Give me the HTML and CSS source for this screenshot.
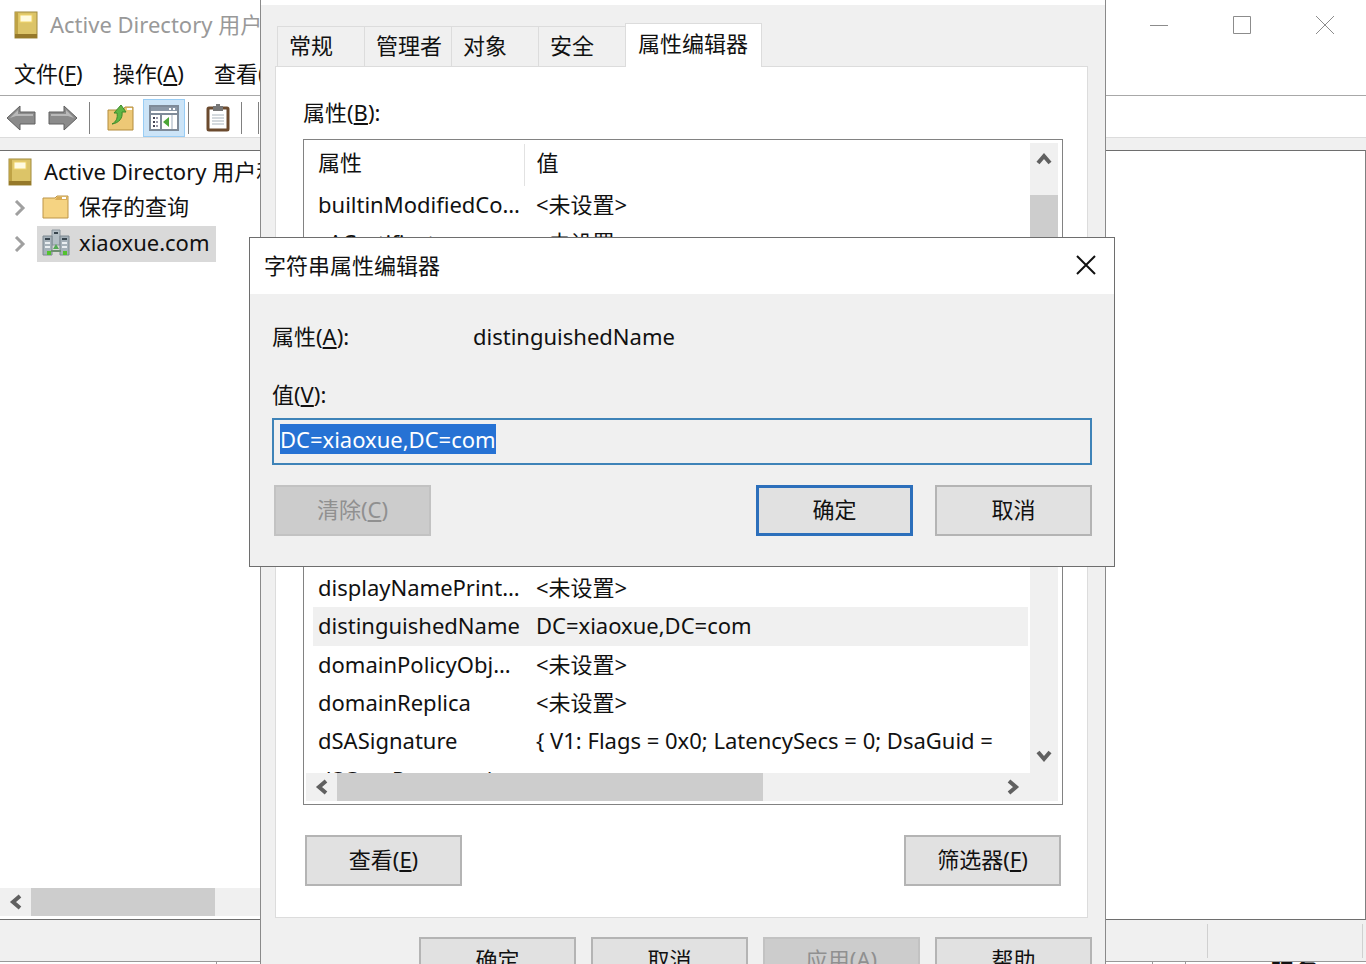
FILE: index.html
```
<!DOCTYPE html>
<html lang="zh-CN">
<head>
    <meta charset="UTF-8">
    <meta name="viewport" content="width=device-width, initial-scale=1.0">
    <title>Active Directory 用户和计算机</title>
    <link rel="stylesheet" href="styles.css">
</head>
<body>

<!-- Main console window -->
<div class="console">
    <div class="console-title">
        <svg class="icon-book" width="24" height="28" viewBox="0 0 24 28">
            <rect x="1" y="1" width="22" height="26" fill="#dcc468" stroke="#a08a3c"/>
            <rect x="1" y="1" width="3" height="26" fill="#bfa345"/>
            <rect x="1" y="23" width="22" height="4" fill="#96792a"/>
            <rect x="6" y="4" width="12" height="7" fill="#fffbe0" stroke="#f0d468"/>
        </svg>
        <span class="console-name">Active Directory 用户和计算机</span>
        <div class="window-buttons">
            <button aria-label="最小化"><svg width="20" height="20" viewBox="0 0 20 20"><path d="M1 10.500H19"/></svg></button>
            <button aria-label="最大化"><svg width="20" height="20" viewBox="0 0 20 20"><path d="M1.500 1.500H18.500V18.500H1.500Z"/></svg></button>
            <button aria-label="关闭"><svg width="20" height="20" viewBox="0 0 20 20"><path d="M1 1L19 19M19 1L1 19"/></svg></button>
        </div>
    </div>

    <div class="menubar">
        <button>文件(<u>F</u>)</button>
        <button>操作(<u>A</u>)</button>
        <button>查看(<u>V</u>)</button>
        <button>帮助(<u>H</u>)</button>
    </div>

    <div class="toolbar">
        <button class="tool" aria-label="后退">
            <svg width="30" height="28" viewBox="0 0 30 28">
                <path d="M1 14L14 2V8H29V20H14V26Z" fill="#8b8b8b" stroke="#606060"/>
                <path d="M4 14L12 6V10H27V12H10Z" fill="#b9b9b9"/>
            </svg>
        </button>
        <button class="tool" aria-label="前进">
            <svg width="30" height="28" viewBox="0 0 30 28">
                <path d="M29 14L16 2V8H1V20H16V26Z" fill="#8b8b8b" stroke="#606060"/>
                <path d="M26 14L18 6V10H3V12H20Z" fill="#b9b9b9"/>
            </svg>
        </button>
        <span class="sep"></span>
        <button class="tool" aria-label="上一级">
            <svg width="28" height="28" viewBox="0 0 28 28">
                <path d="M1 6H10L12 9L16 6L18 3H26V26H1Z" fill="#edc876" stroke="#b38c3c"/>
                <path d="M20 4H25V6H20Z" fill="#fff"/>
                <path d="M5 20C9 18 11 14 10 9L7 9L14 1L19 8L15 8C16 14 12 19 5 20Z" fill="#5fb544" stroke="#3c8a29"/>
            </svg>
        </button>
        <button class="tool tool-on" aria-label="显示/隐藏控制台树">
            <svg width="30" height="26" viewBox="0 0 30 26">
                <rect x="1" y="1" width="28" height="24" fill="#fff" stroke="#7f8b99" stroke-width="2"/>
                <rect x="2" y="2" width="26" height="4" fill="#8c99a8"/>
                <path d="M20 4H22M24 4H26" stroke="#fff" stroke-width="2"/>
                <path d="M2 9H28M12 9V25" stroke="#7f8b99" stroke-width="2"/>
                <path d="M4 13H6M4 17H6M4 21H6" stroke="#445" stroke-width="2"/>
                <path d="M7 13H9M7 17H9M7 21H9" stroke="#99a" stroke-width="2"/>
                <path d="M14 17L20 12V22Z" fill="#4ca637"/>
                <path d="M23 10V24" stroke="#cfd6de" stroke-width="2"/>
            </svg>
        </button>
        <span class="sep"></span>
        <button class="tool" aria-label="属性">
            <svg width="24" height="28" viewBox="0 0 24 28">
                <rect x="2" y="4" width="20" height="22" rx="1" fill="#fff" stroke="#6b4a2e" stroke-width="3"/>
                <path d="M7 2H10V0H14V2H17V7H7Z" fill="#777"/>
                <path d="M6 11H18M6 14H18M6 17H18M6 20H18" stroke="#a9b4bd"/>
            </svg>
        </button>
        <span class="sep"></span>
        <span class="sep"></span>
    </div>

    <div class="workspace">
        <div class="tree">
            <ul>
                <li>
                    <svg class="icon-book" width="24" height="28" viewBox="0 0 24 28">
                        <rect x="1" y="1" width="22" height="26" fill="#dcc468" stroke="#a08a3c"/>
                        <rect x="1" y="1" width="3" height="26" fill="#bfa345"/>
                        <rect x="1" y="23" width="22" height="4" fill="#96792a"/>
                        <rect x="6" y="4" width="12" height="7" fill="#fffbe0" stroke="#f0d468"/>
                    </svg>
                    <span>Active Directory 用户和计算机</span>
                </li>
                <li class="child">
                    <svg class="chevron" width="12" height="16" viewBox="0 0 12 16"><path d="M2 1L9 8L2 15"/></svg>
                    <span class="node">
                        <svg width="28" height="26" viewBox="0 0 28 26">
                            <path d="M1 4H13L15 2H26V24H1Z" fill="#f5d382" stroke="#bd9548"/>
                            <path d="M15 3H25V6H13Z" fill="#d9ac55"/>
                            <path d="M20 4H24" stroke="#fff" stroke-width="2"/>
                        </svg>
                        <span>保存的查询</span>
                    </span>
                </li>
                <li class="child">
                    <svg class="chevron" width="12" height="16" viewBox="0 0 12 16"><path d="M2 1L9 8L2 15"/></svg>
                    <span class="node node-on">
                        <svg width="28" height="28" viewBox="0 0 28 28">
                            <path d="M10 1H18V16H10Z" fill="#b4bfc6" stroke="#8a959d"/>
                            <path d="M1 7H10V26H1Z" fill="#a5b1b9" stroke="#7d8890"/>
                            <path d="M18 7H27V26H18Z" fill="#a5b1b9" stroke="#7d8890"/>
                            <path d="M12 4H16M3 10H8M20 10H25" stroke="#37444d" stroke-width="2"/>
                            <path d="M3 14H8M20 14H25M3 18H8M20 18H25" stroke="#e9eef1" stroke-width="2"/>
                            <path d="M11 20L14 15L17 20Z" fill="#54a955"/>
                            <path d="M5 22H9V26H5ZM21 22H25V26H21Z" fill="#53c22f"/>
                            <path d="M9 22H19" stroke="#6f8f72" stroke-width="2"/>
                        </svg>
                        <span>xiaoxue.com</span>
                    </span>
                </li>
            </ul>
            <div class="hscroll">
                <button aria-label="向左滚动"><svg class="arrow" width="14" height="16" viewBox="0 0 14 16"><path d="M11 2L4 8L11 14"/></svg></button>
                <div class="thumb tree-thumb"></div>
            </div>
        </div>
        <div class="detail"></div>
    </div>

    <div class="statusbar"><span></span><span></span></div>
    <div class="behind">
        <span class="behind-left"></span>
        <span class="behind-mid"></span>
        <span class="behind-cell"></span>
        <b>服务</b>
    </div>
</div>

<!-- Properties dialog -->
<div class="properties" role="dialog" aria-label="属性">
    <div class="tabs" role="tablist">
        <button role="tab">常规</button>
        <button role="tab">管理者</button>
        <button role="tab">对象</button>
        <button role="tab">安全</button>
        <button role="tab" class="active" aria-selected="true">属性编辑器</button>
    </div>
    <div class="tab-page">
        <div class="list-label" id="list-label">属性(<u>B</u>):</div>
        <div class="list">
            <div class="list-view">
                <table aria-labelledby="list-label">
                    <thead>
                        <tr><th class="col-name">属性</th><th>值</th></tr>
                    </thead>
                    <tbody>
                        <tr><td>builtinModifiedCount</td><td>&lt;未设置&gt;</td></tr>
                        <tr><td>cACertificate</td><td>&lt;未设置&gt;</td></tr>
                        <tr><td>canonicalName</td><td>xiaoxue.com/</td></tr>
                        <tr><td>cn</td><td>&lt;未设置&gt;</td></tr>
                        <tr><td>controlAccessRights</td><td>&lt;未设置&gt;</td></tr>
                        <tr><td>createTimeStamp</td><td>&lt;未设置&gt;</td></tr>
                        <tr><td>creationTime</td><td>&lt;未设置&gt;</td></tr>
                        <tr><td>dc</td><td>xiaoxue</td></tr>
                        <tr><td>description</td><td>&lt;未设置&gt;</td></tr>
                        <tr><td>displayName</td><td>&lt;未设置&gt;</td></tr>
                        <tr><td>displayNamePrintable</td><td>&lt;未设置&gt;</td></tr>
                        <tr class="selected"><td>distinguishedName</td><td>DC=xiaoxue,DC=com</td></tr>
                        <tr><td>domainPolicyObject</td><td>&lt;未设置&gt;</td></tr>
                        <tr><td>domainReplica</td><td>&lt;未设置&gt;</td></tr>
                        <tr><td>dSASignature</td><td>{ V1: Flags = 0x0; LatencySecs = 0; DsaGuid =</td></tr>
                        <tr><td>dSCorePropagationData</td><td></td></tr>
                    </tbody>
                </table>
            </div>
            <div class="vscroll">
                <button aria-label="向上滚动"><svg class="arrow" width="16" height="14" viewBox="0 0 16 14"><path d="M2 11L8 4L14 11"/></svg></button>
                <div class="thumb"></div>
                <button aria-label="向下滚动"><svg class="arrow" width="16" height="14" viewBox="0 0 16 14"><path d="M2 3L8 10L14 3"/></svg></button>
            </div>
            <div class="hscroll">
                <button aria-label="向左滚动"><svg class="arrow" width="14" height="16" viewBox="0 0 14 16"><path d="M11 2L4 8L11 14"/></svg></button>
                <div class="thumb list-thumb"></div>
                <button class="last" aria-label="向右滚动"><svg class="arrow" width="14" height="16" viewBox="0 0 14 16"><path d="M3 2L10 8L3 14"/></svg></button>
            </div>
        </div>
        <div class="page-buttons">
            <button class="btn">查看(<u>E</u>)</button>
            <button class="btn">筛选器(<u>F</u>)</button>
        </div>
    </div>
    <div class="dialog-buttons">
        <button class="btn">确定</button>
        <button class="btn">取消</button>
        <button class="btn" disabled>应用(<u>A</u>)</button>
        <button class="btn">帮助</button>
    </div>
</div>

<!-- String attribute editor -->
<form class="editor" role="dialog" aria-labelledby="editor-title" onsubmit="return false">
    <div class="editor-title">
        <span id="editor-title">字符串属性编辑器</span>
        <button type="button" aria-label="关闭"><svg width="20" height="20" viewBox="0 0 20 20"><path d="M1 1L19 19M19 1L1 19"/></svg></button>
    </div>
    <div class="editor-body">
        <div class="editor-row"><span>属性(<u>A</u>):</span><span>distinguishedName</span></div>
        <label for="value">值(<u>V</u>):</label>
        <input type="text" id="value" value="DC=xiaoxue,DC=com" readonly>
        <div class="editor-buttons">
            <button type="button" class="btn" disabled>清除(<u>C</u>)</button>
            <button type="submit" class="btn btn-default">确定</button>
            <button type="button" class="btn">取消</button>
        </div>
    </div>
</form>

<script>
    // Select the whole value when the editor opens
    const valueInput = document.getElementById('value');
    valueInput.focus();
    valueInput.select();
</script>

</body>
</html>
```
FILE: styles.css
```
* {
    box-sizing: border-box;
}
body {
    margin: 0;
    height: 100vh;
    overflow: hidden;
    position: relative;
    background: #fff;
    color: #111;
    font-family: "Noto Sans", "Noto Sans CJK SC", sans-serif;
    font-size: 22px;
    line-height: 30px;
}
button, input {
    font: inherit;
    color: inherit;
}
button {
    border: none;
    background: none;
    padding: 0;
}
u {
    text-underline-offset: 2px;
    text-decoration-thickness: 2px;
}
svg {
    display: block;
    flex: none;
}

/* Console window */
.console {
    height: 100vh;
    display: flex;
    flex-direction: column;
}
.console-title {
    height: 50px;
    padding-left: 14px;
    display: flex;
    align-items: center;
    gap: 12px;
    color: #999;
    white-space: nowrap;
}
.console-name, .tree li span span, .tree li > span:last-child {
    padding-bottom: 2px;
}
.window-buttons {
    margin-left: auto;
    display: flex;
}
.window-buttons button {
    width: 83px;
    height: 48px;
    display: flex;
    align-items: center;
    justify-content: center;
}
.window-buttons svg {
    fill: none;
    stroke: #8c8c8c;
}
.menubar {
    height: 46px;
    padding-left: 14px;
    display: flex;
    align-items: center;
    gap: 30px;
    border-bottom: 1px solid #a8a8a8;
}
.toolbar {
    height: 42px;
    padding: 3px 0 0 6px;
    display: flex;
    align-items: center;
    gap: 12px;
    border-bottom: 1px solid #dcdcdc;
}
.tool-on {
    width: 42px;
    height: 38px;
    margin: 0 -8px 0 -4px;
    display: flex;
    align-items: center;
    justify-content: center;
    background: #cce4f7;
    border: 1px solid #99cdf5;
}
.sep {
    width: 1px;
    height: 32px;
    margin: 0 5px 0 -1px;
    background: #808080;
}
.workspace {
    flex: 1;
    min-height: 0;
    display: flex;
    border-top: 12px solid #f0f0f0;
}
.tree, .detail {
    border-top: 1px solid #6e6e6e;
    border-bottom: 1px solid #6e6e6e;
}
.tree {
    width: 30%;
    display: flex;
    flex-direction: column;
    overflow: hidden;
    padding-bottom: 3px;
    white-space: nowrap;
}
.tree ul {
    flex: 1;
    margin: 0;
    padding: 3px 0 0 8px;
    list-style: none;
}
.tree li {
    height: 36px;
    display: flex;
    align-items: center;
    gap: 12px;
}
.tree .child {
    padding-left: 6px;
    gap: 11px;
}
.tree .node {
    height: 36px;
    padding: 0 6px 0 5px;
    display: flex;
    align-items: center;
    gap: 9px;
}
.node-on {
    background: #d9d9d9;
}
.chevron {
    fill: none;
    stroke: #a0a0a0;
    stroke-width: 3;
}
.detail {
    flex: 1;
    border-right: 1px solid #808080;
}
.statusbar {
    height: 41px;
    padding: 4px 3px 3px;
    display: flex;
    justify-content: flex-end;
    background: #f0f0f0;
}
.statusbar span {
    border-right: 1px solid #d0d0d0;
}
.statusbar span:last-child {
    width: 155px;
}

/* Top edge of the window underneath */
.behind {
    height: 3px;
    overflow: hidden;
    display: flex;
    justify-content: flex-end;
    border-top: 1px solid #999;
    font-size: 24px;
    line-height: 20px;
}
.behind span {
    border-right: 1px solid #999;
}
.behind-left {
    width: 217px;
    margin-right: auto;
}
.behind-cell {
    width: 33px;
}
.behind b {
    width: 180px;
    padding-left: 84px;
}

/* Scroll bars */
.hscroll, .vscroll {
    display: flex;
    background: #f0f0f0;
}
.hscroll {
    height: 28px;
}
.hscroll button {
    width: 31px;
}
.vscroll {
    flex-direction: column;
}
.vscroll button {
    height: 30px;
}
.hscroll button, .vscroll button {
    display: flex;
    align-items: center;
    justify-content: center;
}
.hscroll .last {
    margin-left: auto;
}
.arrow {
    fill: none;
    stroke: #606060;
    stroke-width: 4;
}
.thumb {
    background: #cdcdcd;
}
.tree-thumb {
    width: 184px;
}

/* Push buttons */
.btn {
    width: 157px;
    height: 51px;
    padding-bottom: 4px;
    background: #e1e1e1;
    border: 2px solid #b4b4b4;
}
.btn:disabled {
    background: #ccc;
    border-color: #c2c2c2;
    color: #909090;
}
.btn-default {
    border: 3px solid #2c6fbb;
}

/* Properties dialog */
.properties {
    position: absolute;
    top: 0;
    left: 260px;
    right: 260px;
    padding: 18px 17px 0 14px;
    background: #f0f0f0;
    border: solid #8a8a8a;
    border-width: 0 1px;
    box-shadow: inset 0 5px #fff;
}
.tabs {
    padding: 5px 0 0 2px;
    display: flex;
    align-items: flex-end;
}
.tabs button {
    width: 87px;
    height: 40px;
    padding: 0 0 3px 11px;
    text-align: left;
    border: 1px solid #dcdcdc;
    border-width: 1px 0 0 1px;
}
.tabs .active {
    width: 137px;
    height: 44px;
    margin-bottom: -1px;
    padding: 0 0 6px 12px;
    background: #fff;
    border-width: 1px 1px 0;
    z-index: 1;
}
.tab-page {
    padding: 30px 24px 31px 27px;
    background: #fff;
    border: 1px solid #dcdcdc;
}
.list {
    height: 666px;
    margin-top: 12px;
    padding: 3px 4px 3px 2px;
    display: grid;
    grid-template-columns: minmax(0, 1fr) 28px;
    grid-template-rows: minmax(0, 1fr) 28px;
    border: 1px solid #828282;
}
.list-view {
    overflow: hidden;
    padding: 1px 2px 0 7px;
}
.list table {
    width: 100%;
    table-layout: fixed;
    border-collapse: collapse;
}
.list th, .list td {
    height: 38px;
    padding: 0 3px 3px 5px;
    text-align: left;
    font-weight: normal;
    white-space: nowrap;
    overflow: hidden;
    text-overflow: ellipsis;
}
.list th {
    height: 42px;
    padding-bottom: 6px;
}
.list tr :last-child {
    padding-left: 12px;
    padding-right: 0;
    text-overflow: clip;
}
.list tr:nth-child(3n) td {
    height: 39px;
}
.list .col-name {
    width: 211px;
    border-right: 1px solid #e2e2e2;
}
.selected {
    background: #f0f0f0;
}
.vscroll {
    padding: 1px 0 2px;
}
.vscroll .thumb {
    height: 58px;
    margin-top: 21px;
}
.vscroll button:last-child {
    margin-top: auto;
}
.list .hscroll {
    grid-column: 1 / 3;
    padding-right: 30px;
}
.list-thumb {
    width: 59%;
}
.page-buttons {
    margin: 30px 2px 0;
    display: flex;
    justify-content: space-between;
}
.dialog-buttons {
    margin-right: -4px;
    padding: 19px 0 14px;
    display: flex;
    justify-content: flex-end;
    gap: 15px;
}
.dialog-buttons .btn {
    padding-bottom: 8px;
}

/* String attribute editor */
.editor {
    position: absolute;
    top: 237px;
    left: 249px;
    right: 251px;
    background: #f0f0f0;
    border: 1px solid #6e6e6e;
}
.editor-title {
    height: 56px;
    padding: 0 18px 3px 14px;
    display: flex;
    align-items: center;
    justify-content: space-between;
    background: #fff;
}
.editor-title svg {
    fill: none;
    stroke: #111;
    stroke-width: 2;
}
.editor-body {
    padding: 27px 22px 30px;
}
.editor-row {
    margin-bottom: 28px;
    display: grid;
    grid-template-columns: 201px 1fr;
}
.editor-body label {
    display: block;
}
.editor input {
    display: block;
    width: 100%;
    height: 47px;
    margin: 9px 0 20px;
    padding: 0 6px 6px;
    background: #f0f0f0;
    border: 2px solid #3e83b8;
    outline: none;
}
.editor input::selection {
    background: #2672d4;
    color: #fff;
}
.editor-buttons {
    padding-left: 2px;
    display: flex;
    gap: 22px;
}
.editor-buttons .btn:first-child {
    margin-right: auto;
}
```
